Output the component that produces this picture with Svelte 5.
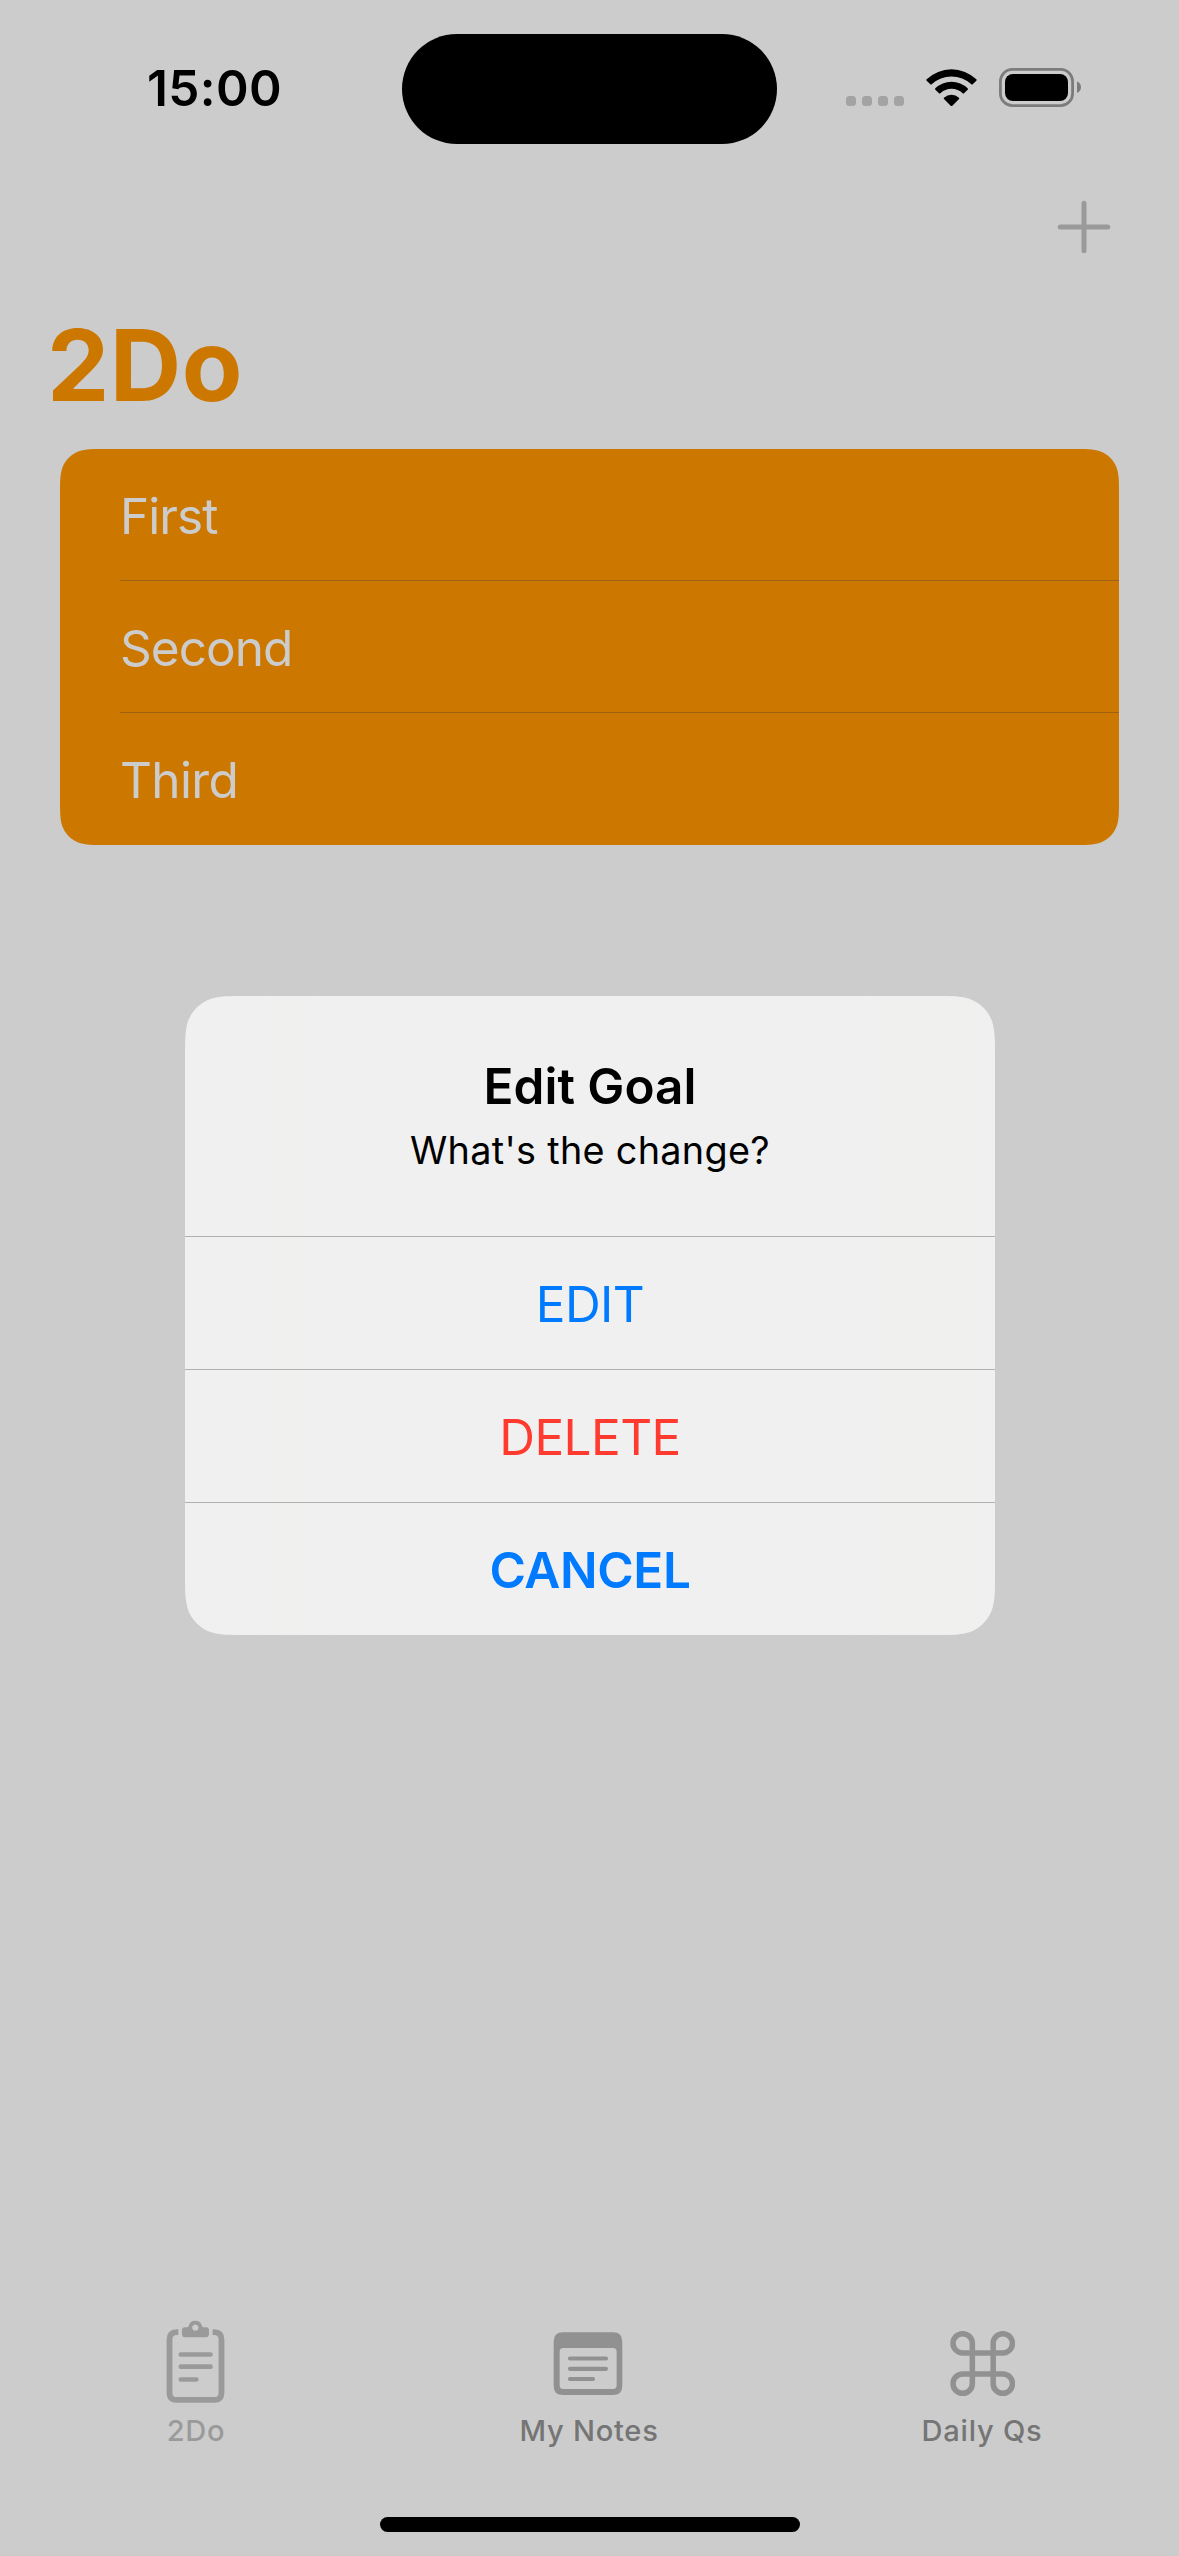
<script>
  const goals = ['First', 'Second', 'Third'];
  const actions = [
    { label: 'EDIT', kind: 'default' },
    { label: 'DELETE', kind: 'destructive' },
    { label: 'CANCEL', kind: 'cancel' }
  ];

  // Continuous-curvature rounded rectangle, the corner shape iOS uses.
  function smoothRect(w, h, r) {
    const a = 1.528665 * r, b = 1.088493 * r, c = 0.868407 * r;
    const d = 0.631494 * r, e = 0.372824 * r, f = 0.16906 * r, g = 0.074911 * r;
    return `path('M${a} 0 L${w - a} 0 C${w - b} 0 ${w - c} 0 ${w - d} ${g} C${w - e} ${f} ${w - f} ${e} ${w - g} ${d} C${w} ${c} ${w} ${b} ${w} ${a} ` +
      `L${w} ${h - a} C${w} ${h - b} ${w} ${h - c} ${w - g} ${h - d} C${w - f} ${h - e} ${w - e} ${h - f} ${w - d} ${h - g} C${w - c} ${h} ${w - b} ${h} ${w - a} ${h} ` +
      `L${a} ${h} C${b} ${h} ${c} ${h} ${d} ${h - g} C${e} ${h - f} ${f} ${h - e} ${g} ${h - d} C0 ${h - c} 0 ${h - b} 0 ${h - a} ` +
      `L0 ${a} C0 ${b} 0 ${c} ${g} ${d} C${f} ${e} ${e} ${f} ${d} ${g} C${c} 0 ${b} 0 ${a} 0 Z')`;
  }
</script>

<div class="screen">
  <header class="status">
    <span class="time">15:00</span>
    <div class="island"></div>
    <div class="indicators">
      <div class="dots"><i></i><i></i><i></i><i></i></div>
      <svg class="wifi" viewBox="438 144 153 117" width="51" height="39">
        <path d="M440 178 A107 107 0 0 1 589 178 Q591 180 589 182 L578 193 Q576 195 574 193 A88 88 0 0 0 455 193 Q453 195 451 193 L440 182 Q438 180 440 178Z" />
        <path d="M466 205 A70 70 0 0 1 563 205 Q565 207 563 209 L552 220 Q550 222 548 220 A48 48 0 0 0 481 220 Q479 222 477 220 L466 209 Q464 207 466 205Z" />
        <path d="M492 233 A34 34 0 0 1 537 233 Q539 235 537 237 L517 257 Q514.500 259 512 257 L492 237 Q490 235 492 233Z" />
      </svg>
      <svg class="battery" viewBox="0 0 83 39" width="83" height="39">
        <rect x="1.400" y="1.400" width="72.200" height="36.200" rx="12" fill="none" stroke="#7c7c7c" stroke-width="2.800" />
        <rect x="6" y="6" width="63" height="27" rx="8" />
        <path d="M78 13.300 Q82 15.500 82 19.200 T78 25 Z" fill="#7c7c7c" />
      </svg>
    </div>
  </header>

  <nav class="toolbar">
    <svg viewBox="0 0 54 54" width="54" height="54" aria-label="Add">
      <path d="M27 3.200V50.800M3.200 27H50.800" stroke="#9a9a9a" stroke-width="5" stroke-linecap="round" />
    </svg>
  </nav>

  <h1>2Do</h1>

  <ul class="goals" style:clip-path={smoothRect(1059, 396, 30)}>
    {#each goals as goal}
      <li><span>{goal}</span></li>
    {/each}
  </ul>

  <div class="alert" style:clip-path={smoothRect(810, 639, 40)}>
    <div class="message">
      <h2>Edit Goal</h2>
      <p>What's the change?</p>
    </div>
    {#each actions as action}
      <button class={action.kind}>{action.label}</button>
    {/each}
  </div>

  <footer class="tabs">
    <div class="tab active">
      <svg viewBox="139 60 181 250" width="60.300" height="83.300">
        <g fill="none" stroke="#9a9a9a" stroke-linecap="round">
          <path d="M176 96.500H171Q149.500 97 149.500 119V278Q149.500 300 171 300H284Q305.500 300 305.500 278V119Q305.500 97 284 96.500H279" stroke-width="17.500" stroke-linecap="butt" />
          <path d="M183.500 163.500H272.500M183.500 200H272.500M183.500 238.500H230" stroke-width="14" />
        </g>
        <path fill="#9a9a9a" fill-rule="evenodd" d="M196 82H202Q206 82 207 78A20.500 20.500 0 0 1 247 78Q248 82 252 82H259Q268 82 268 91V103Q268 112 259 112H196Q187 112 187 103V91Q187 82 196 82ZM227 73.500a9.500 9.500 0 1 0 .1 0Z" />
      </svg>
      <span>2Do</span>
    </div>
    <div class="tab">
      <svg viewBox="160 60 217 250" width="72.300" height="83.300">
        <path fill="#919191" fill-rule="evenodd" d="M190 97H340Q368 97 368 125V257Q368 285 340 285H190Q162 285 162 257V125Q162 97 190 97ZM191 144Q180 144 180 155V256Q180 267 191 267H340Q351 267 351 256V155Q351 144 340 144Z" />
        <path d="M211 175.500H319M211 206.500H319M211 237H280" fill="none" stroke="#919191" stroke-width="12.500" stroke-linecap="round" />
      </svg>
      <span>My Notes</span>
    </div>
    <div class="tab">
      <svg viewBox="149 60 197 250" width="65.700" height="83.300">
        <path d="M187 159a29 29 0 1 1 29-29V251a29 29 0 1 1-29-29H307.500a29 29 0 1 1-29 29V130a29 29 0 1 1 29 29Z" fill="none" stroke="#919191" stroke-width="16.500" />
      </svg>
      <span>Daily Qs</span>
    </div>
  </footer>
  <div class="home"></div>
</div>

<style>
  :global(body) { margin: 0; background: #ccc; }
  .screen {
    box-sizing: border-box;
    width: 1179px;
    height: 2556px;
    display: flex;
    flex-direction: column;
    overflow: hidden;
    background: #ccc;
    color: #000;
    font-family: Inter, "Liberation Sans", sans-serif;
    font-kerning: normal;
  }
  .status {
    display: grid;
    grid-template-columns: 402px 375px 402px;
    height: 176px;
    align-items: start;
  }
  .time {
    padding-left: 147px;
    font-size: 49.5px;
    font-weight: 600;
    letter-spacing: 0.38px;
    line-height: 176px;
  }
  .island { height: 110px; margin-top: 34px; border-radius: 55px; background: #000; }
  .indicators { display: flex; align-items: flex-end; padding: 68px 0 0 69px; }
  .dots { display: flex; gap: 6px; margin-bottom: 1px; }
  .dots i { width: 10px; height: 10px; border-radius: 3.5px; background: #a3a3a3; }
  .wifi { margin-left: 22px; }
  .battery { margin-left: 22px; }
  .toolbar { display: flex; justify-content: flex-end; padding: 24px 68px 0 0; height: 129px; box-sizing: border-box; }
  h1 {
    margin: 0 0 24px 47px;
    color: #cc7700;
    font-size: 99px;
    font-weight: 700;
    letter-spacing: 0.4px;
    line-height: 120px;
  }
  .goals {
    list-style: none;
    margin: 0 60px;
    padding: 0;
    background: #cc7700;
  }
  .goals li { display: flex; height: 132px; padding-left: 60px; }
  .goals span {
    flex: 1;
    box-sizing: border-box;
    height: 132px;
    padding-top: 1px;
    color: #ccc;
    font-size: 49.5px;
    letter-spacing: -0.95px;
    line-height: 132px;
    border-bottom: 1px solid #9f6114;
  }
  .goals li:last-child span { border-bottom: 0; letter-spacing: -0.63px; }
  .alert {
    width: 810px;
    height: 639px;
    margin: 151px 0 0 185px;
    background:
      linear-gradient(90deg, transparent 70px, #eef1ed66 95px, #eef1ed66 118px, transparent 150px),
      linear-gradient(90deg, transparent 660px, #eef1ed66 700px, #eef1ed66 790px, transparent 810px),
      #f0f0f0;
    text-align: center;
  }
  .message { height: 240px; box-sizing: border-box; padding-top: 60px; }
  h2 { margin: 0; font-size: 49.5px; font-weight: 600; line-height: 60px; }
  .message p { margin: 11px 0 0; font-size: 37.8px; letter-spacing: 0.3px; line-height: 46px; }
  button {
    display: block;
    box-sizing: border-box;
    width: 100%;
    height: 133px;
    margin: 0;
    padding: 2px 0 0;
    border: 0;
    border-top: 1px solid #b0b0b0;
    background: none;
    font: 400 49.5px/130px Inter, "Liberation Sans", sans-serif;
    letter-spacing: -0.6px;
    color: #007aff;
  }
  .destructive { color: #ff3b30; }
  .cancel { font-weight: 600; letter-spacing: -0.36px; }
  .tabs { display: grid; grid-template-columns: repeat(3, 1fr); margin-top: auto; }
  .tab { display: flex; flex-direction: column; align-items: center; gap: 7.7px; color: #757575; }
  .tab span { margin-right: 1px; font-size: 29.1px; font-weight: 500; letter-spacing: 0.75px; line-height: 40px; }
  .active { color: #9a9a9a; }
  .home { width: 420px; height: 15px; margin: 66px auto 24px; border-radius: 7.5px; background: #000; }
</style>
